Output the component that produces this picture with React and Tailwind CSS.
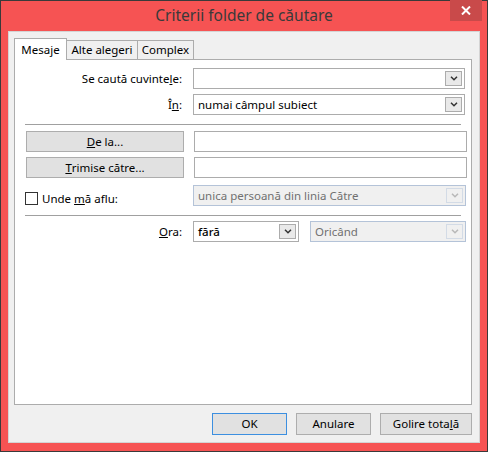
import React from 'react';

const Chevron = ({ disabled }) => (
  <span className={`absolute right-[2px] top-[2px] bottom-[2px] w-[17px] flex items-center justify-center border ${disabled ? 'border-[#d3dbe6] bg-[#f0f0f0]' : 'border-[#acacac] bg-[#e9e9e9]'}`}>
    <svg width="8" height="5" viewBox="0 0 8 5">
      <path d="M1 0.8 L4 3.8 L7 0.8" fill="none" stroke={disabled ? '#b8b8b8' : '#333'} strokeWidth="1.5" />
    </svg>
  </span>
);

function Combo({ value, disabled, className }) {
  return (
    <div className={`relative h-[21px] border ${disabled ? 'border-[#b4c3d8] bg-[#f0f0f0] text-[#707070]' : 'border-[#acacac] bg-white text-black'} pl-[4px] flex items-center ${className}`}>
      <span>{value}</span>
      <Chevron disabled={disabled} />
    </div>
  );
}

function Label({ children }) {
  return <div className="w-[168px] text-right pr-[1px] shrink-0">{children}</div>;
}

function SideButton({ children }) {
  return (
    <button className="ml-[11px] w-[158px] h-[21px] border border-[#adadad] bg-[#e1e1e1] shrink-0 flex items-center justify-center">
      {children}
    </button>
  );
}

export default function App() {
  return (
    <div className="w-[488px] h-[452px] bg-[#f65353] border border-[#3a3a3a] flex flex-col text-[11.5px] text-black" style={{ fontFamily: '"Noto Sans", "Liberation Sans", sans-serif' }}>
      {/* title bar */}
      <div className="relative h-[30px] shrink-0 flex items-center justify-center">
        <span className="text-[15.5px] text-[#3a3a3a] pb-[1px]">Criterii folder de căutare</span>
        <button className="absolute top-[-1px] right-[5px] w-[32px] h-[21px] bg-[#c94a4a] flex items-center justify-center">
          <svg width="10" height="9" viewBox="0 0 10 9">
            <path d="M1 0.5 L9 8.5 M9 0.5 L1 8.5" stroke="#fff" strokeWidth="2" />
          </svg>
        </button>
      </div>

      {/* client area */}
      <div className="mx-[7px] mb-[8px] flex-1 border border-[#d4d4d4] bg-[#f0f0f0] flex flex-col pl-[5px] pr-[7px] pt-[6px]">
        {/* tabs */}
        <div className="flex items-end h-[21px]">
          <div className="relative z-10 w-[53px] h-[22px] mb-[-1px] border border-b-0 border-[#acacac] bg-white flex items-center justify-center">Mesaje</div>
          <div className="w-[71px] h-[19px] border border-b-0 border-l-0 border-[#acacac] bg-[#f0f0f0] flex items-center justify-center">Alte alegeri</div>
          <div className="w-[56px] h-[19px] border border-b-0 border-l-0 border-[#acacac] bg-[#f0f0f0] flex items-center justify-center">Complex</div>
        </div>

        {/* panel */}
        <div className="h-[346px] border border-[#acacac] bg-white flex flex-col shrink-0">
          <div className="mt-[8px] flex items-center">
            <Label>Se caută cuvinte<u>l</u>e:</Label>
            <Combo value="" className="ml-[10px] w-[272px]" />
          </div>
          <div className="mt-[5px] flex items-center">
            <Label>Î<u>n</u>:</Label>
            <Combo value="numai câmpul subiect" className="ml-[10px] w-[272px]" />
          </div>
          <div className="mt-[9px] mx-[10px] h-px bg-[#a0a0a0]" />

          <div className="mt-[6px] flex items-center">
            <SideButton><u>D</u>e la...</SideButton>
            <div className="ml-[10px] w-[273px] h-[21px] border border-[#acacac] bg-white" />
          </div>
          <div className="mt-[5px] flex items-center">
            <SideButton><u>T</u>rimise către...</SideButton>
            <div className="ml-[10px] w-[273px] h-[21px] border border-[#acacac] bg-white" />
          </div>
          <div className="mt-[5px] flex items-center">
            <div className="w-[168px] shrink-0 flex items-center pl-[10px] pt-[7px]">
              <span className="w-[13px] h-[13px] border border-[#333] bg-white mr-[4px]" />
              <span>Unde <u>m</u>ă aflu:</span>
            </div>
            <Combo value="unica persoană din linia Către" disabled className="ml-[10px] w-[273px]" />
          </div>
          <div className="mt-[8px] mx-[10px] h-px bg-[#a0a0a0]" />

          <div className="mt-[5px] flex items-center">
            <Label><u>O</u>ra:</Label>
            <Combo value="fără" className="ml-[10px] w-[106px] font-medium" />
            <Combo value="Oricând" disabled className="ml-[11px] w-[156px]" />
          </div>
        </div>

        {/* buttons */}
        <div className="mt-[8px] flex justify-end gap-[9px]">
          <button className="w-[75px] h-[22px] border border-[#3c8fe0] bg-[#e1e1e1]">OK</button>
          <button className="w-[75px] h-[22px] border border-[#adadad] bg-[#e1e1e1]">Anulare</button>
          <button className="w-[92px] h-[22px] border border-[#adadad] bg-[#e1e1e1]">Golire tota<u>l</u>ă</button>
        </div>
      </div>
    </div>
  );
}
